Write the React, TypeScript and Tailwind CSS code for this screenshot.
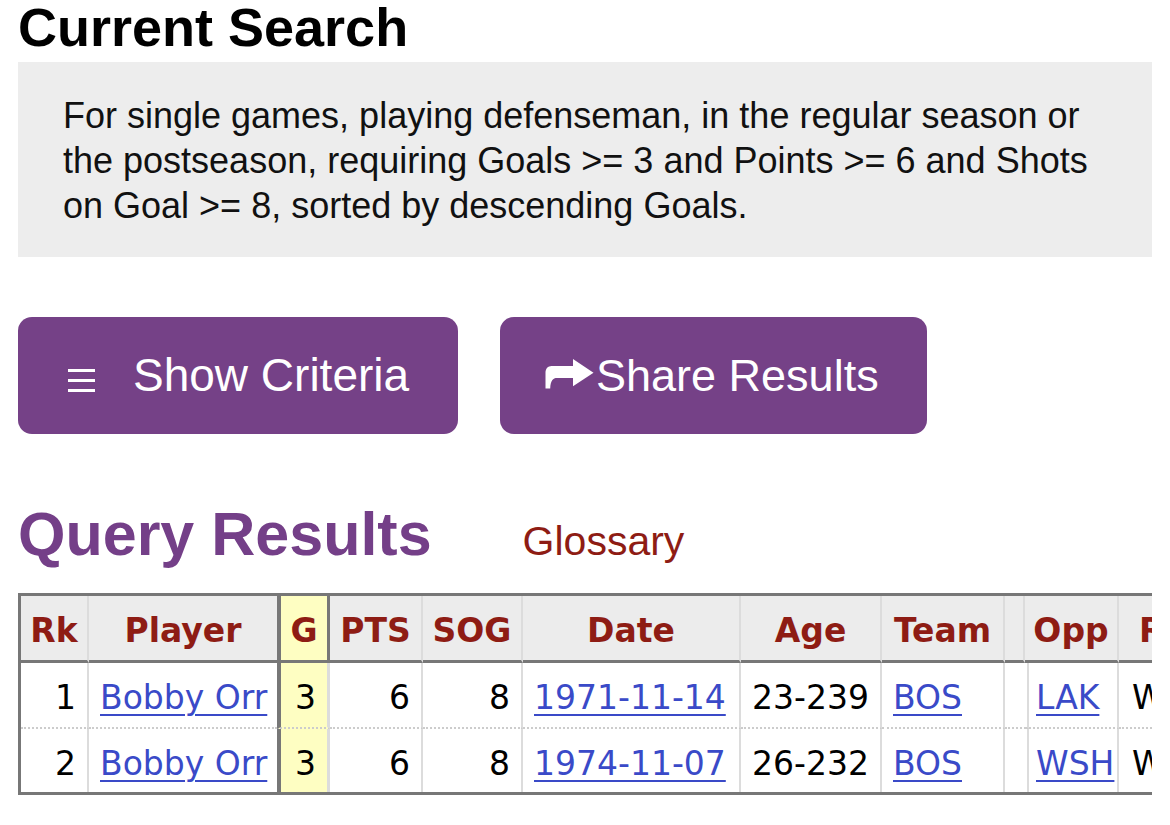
import React from "react";

const headers: string[] = ["Rk", "Player", "G", "PTS", "SOG", "Date", "Age", "Team", "", "Opp", "Result"];

type Row = {
  rk: string;
  player: string;
  g: string;
  pts: string;
  sog: string;
  date: string;
  age: string;
  team: string;
  opp: string;
  result: string;
};

const rows: Row[] = [
  { rk: "1", player: "Bobby Orr", g: "3", pts: "6", sog: "8", date: "1971-11-14", age: "23-239", team: "BOS", opp: "LAK", result: "W 8-4" },
  { rk: "2", player: "Bobby Orr", g: "3", pts: "6", sog: "8", date: "1974-11-07", age: "26-232", team: "BOS", opp: "WSH", result: "W 10-1" },
];

function MenuIcon() {
  return (
    <div className="flex flex-col gap-[7px] mt-[10px]">
      <div className="w-[27px] h-[3px] bg-white" />
      <div className="w-[27px] h-[3px] bg-white" />
      <div className="w-[27px] h-[3px] bg-white" />
    </div>
  );
}

function ShareIcon() {
  return (
    <svg width="49" height="30" viewBox="0 0 49 30" className="mt-[-4px] shrink-0">
      <path
        d="M28 0 L48.5 13.7 L28 27.2 L28 19 L12 19 C8 19 5.5 21.5 5.2 29.5 L0.5 29.5 L0.5 13.5 C0.5 9.8 3 7 6.5 7 L28 7 Z"
        fill="#ffffff"
      />
    </svg>
  );
}

const headCell =
  "h-[67px] pt-[6px] flex items-center justify-center whitespace-nowrap bg-[#ececec] font-bold text-[#8e1c14] border-b-[3px] border-b-[#777777]";
const bodyCell = "flex items-center whitespace-nowrap px-[11px] pt-[6px]";

function Link({ children }: { children: React.ReactNode }) {
  return (
    <span className="text-[#3a4ac8] underline decoration-[2px] underline-offset-[5px]">{children}</span>
  );
}

export default function App() {
  return (
    <div className="w-[1170px] h-[825px] overflow-hidden bg-white px-[18px] font-['Liberation_Sans',Arial,sans-serif] text-black">
      <h1 className="text-[54px] leading-[54px] font-bold whitespace-nowrap">Current Search</h1>

      <div className="mt-[8px] bg-[#ededed] pt-[31px] pb-[29px] pl-[45px] pr-[38px] text-[36px] leading-[45px] text-[#111]">
        For single games, playing defenseman, in the regular season or the postseason, requiring Goals &gt;= 3 and
        Points &gt;= 6 and Shots on Goal &gt;= 8, sorted by descending Goals.
      </div>

      <div className="mt-[60px] flex gap-[42px]">
        <button className="w-[440px] h-[117px] rounded-[14px] bg-[#754187] flex items-center pl-[50px] text-white text-[46px] whitespace-nowrap">
          <MenuIcon />
          <span className="ml-[38px]">Show Criteria</span>
        </button>
        <button className="w-[427px] h-[117px] rounded-[14px] bg-[#754187] flex items-center pl-[45px] text-white text-[45px] whitespace-nowrap">
          <ShareIcon />
          <span className="ml-[2px]">Share Results</span>
        </button>
      </div>

      <div className="mt-[70px] flex items-baseline h-[61px]">
        <h2 className="text-[61px] leading-[61px] font-bold text-[#743f88] whitespace-nowrap">Query Results</h2>
        <span className="ml-[91px] text-[41px] leading-[41px] text-[#8e1c14]">Glossary</span>
      </div>

      <div className="mt-[28px] overflow-hidden font-['DejaVu_Sans',Verdana,sans-serif] text-[33px]">
        <div className="w-max grid grid-cols-[68px_188px_53px_93px_100px_218px_141px_123px_20px_94px_160px] border-t-[3px] border-l-[3px] border-b-[3px] border-[#777777]">
          {headers.map((label, i) => {
            let extra = "border-r-2 border-r-[#dcdcdc]";
            if (i === 1) extra = "";
            if (i === 2) extra = "bg-[#fefec2] border-l-4 border-l-[#777777] border-r-[3px] border-r-[#777777]";
            return (
              <div key={i} className={`${headCell} ${extra}`}>
                {label}
              </div>
            );
          })}

          {rows.map((r, ri) => {
            const sep =
              ri === 0 ? "h-[66px] border-b-2 [border-bottom-style:dotted] border-b-[#cccccc]" : "h-[63px]";
            const plain = `${bodyCell} ${sep} border-r-2 border-r-[#dcdcdc]`;
            return (
              <React.Fragment key={ri}>
                <div className={`${plain} justify-end`}>{r.rk}</div>
                <div className={`${bodyCell} ${sep} justify-start`}>
                  <Link>{r.player}</Link>
                </div>
                <div
                  className={`${bodyCell} ${sep} justify-end bg-[#fefec2] border-l-4 border-l-[#777777] border-r-[3px] border-r-[#dcdcdc]`}
                >
                  {r.g}
                </div>
                <div className={`${plain} justify-end`}>{r.pts}</div>
                <div className={`${plain} justify-end`}>{r.sog}</div>
                <div className={`${plain} justify-start`}>
                  <Link>{r.date}</Link>
                </div>
                <div className={`${plain} justify-end`}>{r.age}</div>
                <div className={`${plain} justify-start`}>
                  <Link>{r.team}</Link>
                </div>
                <div className={plain} />
                <div className={`${plain} justify-start`}>
                  <Link>{r.opp}</Link>
                </div>
                <div className={`${plain} justify-start pl-[13px]`}>{r.result}</div>
              </React.Fragment>
            );
          })}
        </div>
      </div>
    </div>
  );
}
